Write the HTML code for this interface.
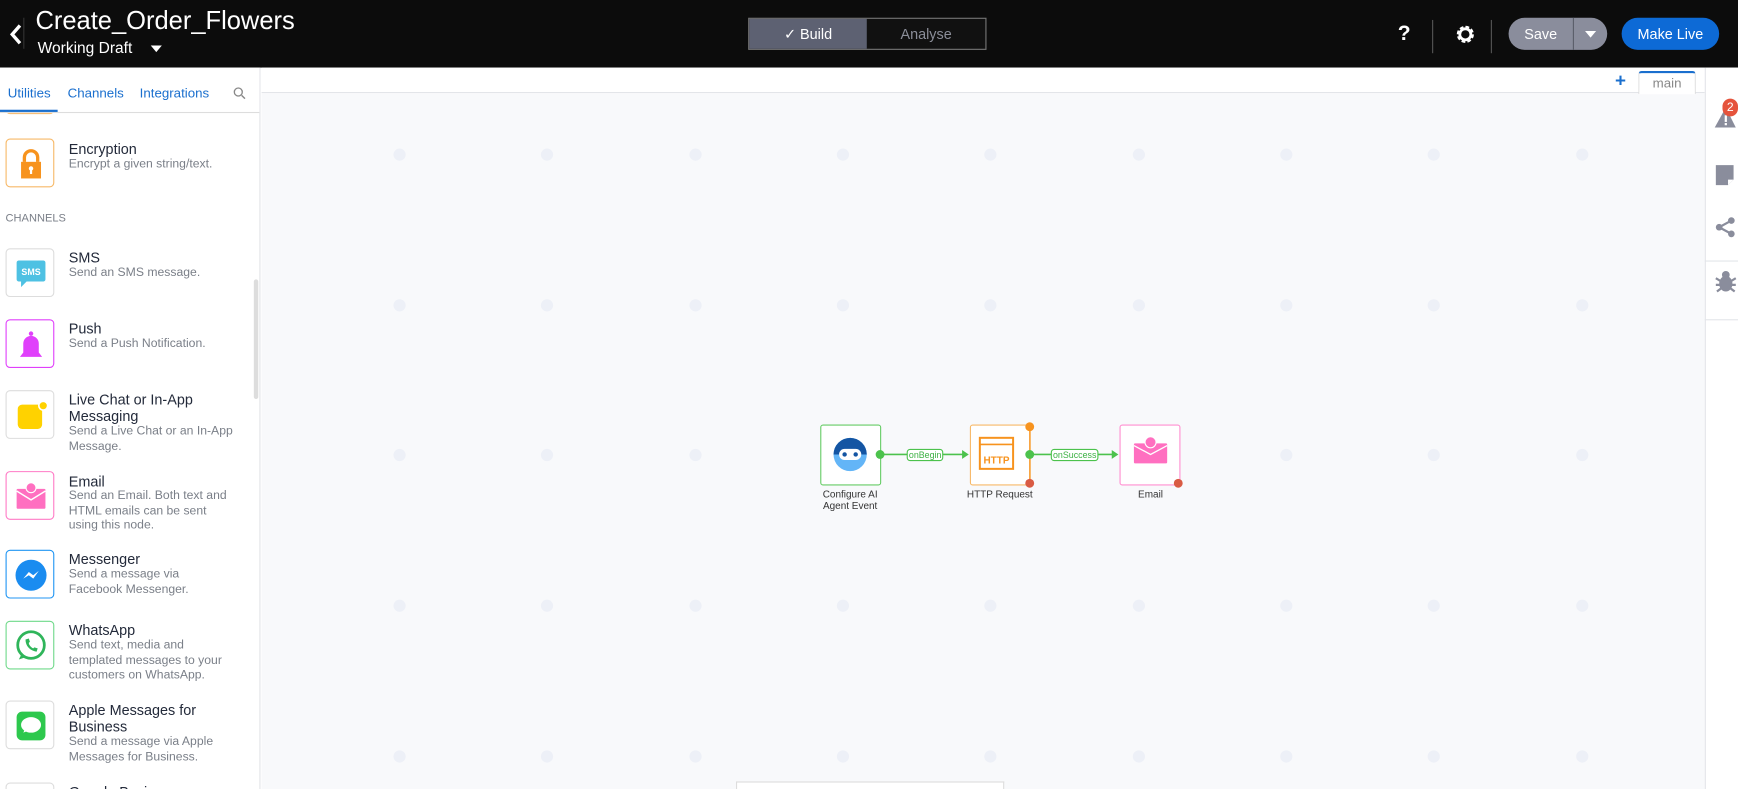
<!DOCTYPE html>
<html><head><meta charset="utf-8"><style>
*{box-sizing:border-box;margin:0;padding:0}
html,body{width:1738px;height:789px;overflow:hidden}
body{background:#fff;font-family:"Liberation Sans",Arial,sans-serif}
#w{width:1568px;height:712px;transform:scale(1.10842);transform-origin:0 0;position:relative;overflow:hidden}
.a{position:absolute}
.hdr{left:0;top:0;width:1568px;height:61px;background:#0c0c0c;color:#fff}
.side{left:0;top:61px;width:235px;height:651px;background:#fff;border-right:1px solid #e2e4e8;overflow:hidden}
.ib{position:absolute;left:5px;width:44px;height:44px;border:1px solid #ddd;border-radius:4px;background:#fff}
.t{position:absolute;left:62px;font-size:13px;color:#232a3a;line-height:15px}
.d{position:absolute;left:62px;font-size:11px;color:#7a7f88;line-height:13.5px;width:152px}
.dot{position:absolute;width:11px;height:11px;border-radius:50%;background:#edf0f7}
.nl{position:absolute;font-size:9px;color:#333;text-align:center;line-height:10px;width:80px}
.lbl{position:absolute;font-size:8px;color:#3cb043;border:1px solid #4cc24c;border-radius:3px;background:#fff;padding:0 1px;line-height:9px}
</style></head><body><div id="w">
<div class="a hdr">
 <svg class="a" style="left:8px;top:21px" width="12" height="20" viewBox="0 0 12 20"><path d="M10 2 L3 10 L10 18" stroke="#fff" stroke-width="3" fill="none"/></svg>
 <div class="a" style="left:21px;top:16px;width:1px;height:28px;background:#333"></div>
 <div class="a" style="left:32px;top:5px;font-size:23px">Create_Order_Flowers</div>
 <div class="a" style="left:34px;top:35px;font-size:14px">Working Draft</div>
 <div class="a" style="left:136px;top:41px;border-left:5px solid transparent;border-right:5px solid transparent;border-top:6px solid #fff"></div>
 <div class="a" style="left:675px;top:16px;width:215px;height:29px;border:1px solid #777;background:#111"></div>
 <div class="a" style="left:676px;top:17px;width:106px;height:27px;background:#5d6172;color:#fff;font-size:13px;text-align:center;line-height:27px">&#10003; Build</div>
 <div class="a" style="left:782px;top:17px;width:107px;height:27px;color:#8b8e99;font-size:13px;text-align:center;line-height:27px">Analyse</div>
 <div class="a" style="left:1261px;top:20px;font-size:19px;font-weight:bold">?</div>
 <div class="a" style="left:1292px;top:18px;width:1px;height:30px;background:#555"></div>
 <svg class="a" style="left:1312px;top:21px" width="20" height="20" viewBox="0 0 20 20"><circle cx="10" cy="10" r="6" fill="none" stroke="#fff" stroke-width="3.5" stroke-dasharray="3 1.7"/><circle cx="10" cy="10" r="5" fill="none" stroke="#fff" stroke-width="2.5"/></svg>
 <div class="a" style="left:1345px;top:18px;width:1px;height:30px;background:#555"></div>
 <div class="a" style="left:1361px;top:16px;width:89px;height:29px;border-radius:15px;background:#8a8d9c"></div>
 <div class="a" style="left:1361px;top:16px;width:58px;height:29px;color:#fff;font-size:13px;text-align:center;line-height:29px">Save</div>
 <div class="a" style="left:1419px;top:16px;width:1px;height:29px;background:#5a5d69"></div>
 <div class="a" style="left:1430px;top:28px;border-left:5px solid transparent;border-right:5px solid transparent;border-top:6px solid #fff"></div>
 <div class="a" style="left:1463px;top:16px;width:88px;height:29px;border-radius:15px;background:#0d6ad6;color:#fff;font-size:13px;text-align:center;line-height:29px">Make Live</div>
</div>
<div class="a side">
 <div class="ib" style="top:30px;height:12px;border-color:#f7b968"></div>
 <div class="a" style="left:0;top:0;width:235px;height:41px;background:#fff;border-bottom:1px solid #ddd"></div>
 <div class="a" style="left:7px;top:16px;font-size:12px;color:#1a6fce">Utilities</div>
 <div class="a" style="left:0;top:38px;width:52px;height:2px;background:#1a6fce"></div>
 <div class="a" style="left:61px;top:16px;font-size:12px;color:#1a6fce">Channels</div>
 <div class="a" style="left:126px;top:16px;font-size:12px;color:#1a6fce">Integrations</div>
 <svg class="a" style="left:210px;top:17px" width="12" height="12"><circle cx="5" cy="5" r="3.6" fill="none" stroke="#888" stroke-width="1.2"/><path d="M8 8l3 3" stroke="#888" stroke-width="1.3"/></svg>
 <div class="ib" style="top:64px;border-color:#f7b968"><svg width="44" height="44"><path d="M16 20v-4a6 6 0 0 1 12 0v4" stroke="#f7931e" stroke-width="3" fill="none"/><rect x="13" y="20" width="18" height="15" fill="#f7931e"/><circle cx="22" cy="26" r="2" fill="#fff"/><rect x="21" y="26" width="2" height="5" fill="#fff"/></svg></div>
 <div class="t" style="top:66px">Encryption</div><div class="d" style="top:81px;width:170px">Encrypt a given string/text.</div>
 <div class="a" style="left:5px;top:131px;font-size:10px;color:#7a7f88">CHANNELS</div>
 <div class="ib" style="top:163px"><svg width="44" height="44"><rect x="9" y="10" width="26" height="19" rx="2" fill="#4ec1e3"/><path d="M13 29v5l5-5z" fill="#4ec1e3"/><text x="22" y="23" font-size="8" fill="#fff" text-anchor="middle" font-family="Liberation Sans" font-weight="bold">SMS</text></svg></div>
 <div class="t" style="top:164px">SMS</div><div class="d" style="top:179px">Send an SMS message.</div>
 <div class="ib" style="top:227px;border-color:#e040fb"><svg width="44" height="44"><path d="M12 33h20l-3-4v-8a7 7 0 0 0-14 0v8z" fill="#e040fb"/><circle cx="22" cy="12" r="2" fill="#e040fb"/></svg></div>
 <div class="t" style="top:228px">Push</div><div class="d" style="top:243px">Send a Push Notification.</div>
 <div class="ib" style="top:291px"><svg width="44" height="44"><rect x="10" y="12" width="22" height="22" rx="4" fill="#ffd200"/><circle cx="33" cy="13" r="4" fill="#ffd200" stroke="#fff" stroke-width="1.5"/></svg></div>
 <div class="t" style="top:292px;width:160px">Live Chat or In-App Messaging</div><div class="d" style="top:322px">Send a Live Chat or an In-App Message.</div>
 <div class="ib" style="top:364px;border-color:#ff7bc6"><svg width="44" height="44"><rect x="9" y="15" width="26" height="18" rx="1" fill="#ff6fc0"/><path d="M9 17l13 8 13-8" stroke="#fff" stroke-width="1.3" fill="none"/><circle cx="22" cy="14" r="4.5" fill="#ff6fc0" stroke="#fff"/></svg></div>
 <div class="t" style="top:366px">Email</div><div class="d" style="top:380px">Send an Email. Both text and HTML emails can be sent using this node.</div>
 <div class="ib" style="top:435px;border-color:#2196f3"><svg width="44" height="44"><circle cx="22" cy="22" r="14" fill="#1a8cf0"/><path d="M15 25l5-6 4 3 5-4-5 7-4-3z" fill="#fff"/></svg></div>
 <div class="t" style="top:436px">Messenger</div><div class="d" style="top:451px;width:120px">Send a message via Facebook Messenger.</div>
 <div class="ib" style="top:499px;border-color:#6fd98a"><svg width="44" height="44"><circle cx="22" cy="21" r="12" fill="none" stroke="#2fb55a" stroke-width="2.5"/><path d="M11 34l3-6 3 4z" fill="#2fb55a"/><path d="M17 16c0 6 4 10 10 11l1-3-3-1-1 1c-2-1-4-3-4-5l1-1-1-3z" fill="#2fb55a"/></svg></div>
 <div class="t" style="top:500px">WhatsApp</div><div class="d" style="top:515px;width:140px">Send text, media and templated messages to your customers on WhatsApp.</div>
 <div class="ib" style="top:571px"><svg width="44" height="44"><rect x="9" y="9" width="26" height="26" rx="5" fill="#2dc84d"/><ellipse cx="22" cy="21" rx="9" ry="7" fill="#fff"/><path d="M15 28l2-4 3 2z" fill="#fff"/></svg></div>
 <div class="t" style="top:572px;width:160px">Apple Messages for Business</div><div class="d" style="top:602px">Send a message via Apple Messages for Business.</div>
 <div class="ib" style="top:645px"></div>
 <div class="t" style="top:646px">Google Business</div>
 <div class="a" style="left:229px;top:191px;width:4px;height:108px;border-radius:2px;background:#ddd"></div>
</div>
<div class="a" style="left:236px;top:108px;width:18px;height:25px;background:#fff;border:1px solid #eee;border-left:none"><div class="a" style="left:3px;top:7px;border-top:5px solid transparent;border-bottom:5px solid transparent;border-right:6px solid #1a6fce"></div></div>
<div class="a" style="left:236px;top:61px;width:1302px;height:23px;background:#fff;border-bottom:1px solid #e3e5e9"></div>
<div class="a" style="left:236px;top:84px;width:1302px;height:628px;background:#f8f9fb"></div>
<div class="a" style="left:1457px;top:65px;font-size:17px;font-weight:bold;color:#1a6fce;line-height:15px">+</div>
<div class="a" style="left:1478px;top:64px;width:52px;height:21px;background:#fff;border:1px solid #ddd;border-top:2px solid #1a6fce;border-bottom:none;border-radius:3px 3px 0 0;font-size:12px;color:#888;text-align:center;line-height:19px">main</div>
<div class="a" style="left:1538px;top:61px;width:30px;height:651px;background:#fff;border-left:1px solid #e3e5e9"></div>
<svg class="a" style="left:1546px;top:95px" width="22" height="22"><path d="M11 2 L20 20 H1z" fill="#8a8d9c"/><rect x="10" y="9" width="2" height="6" fill="#fff"/><rect x="10" y="16" width="2" height="2" fill="#fff"/></svg>
<div class="a" style="left:1554px;top:89px;width:14px;height:16px;border-radius:8px;background:#e5533c;color:#fff;font-size:11px;line-height:16px;text-align:center">2</div>
<svg class="a" style="left:1547px;top:148px" width="18" height="20"><path d="M1 1h16v13l-5 5H1z" fill="#8a8d9c"/><path d="M12 19v-5h5" fill="#fff"/></svg>
<svg class="a" style="left:1547px;top:195px" width="20" height="20"><circle cx="15" cy="4" r="3" fill="#8a8d9c"/><circle cx="4" cy="10" r="3" fill="#8a8d9c"/><circle cx="15" cy="16" r="3" fill="#8a8d9c"/><path d="M15 4L4 10l11 6" stroke="#8a8d9c" stroke-width="2" fill="none"/></svg>
<div class="a" style="left:1538px;top:235px;width:30px;height:1px;background:#e3e5e9"></div>
<svg class="a" style="left:1546px;top:243px" width="22" height="22"><ellipse cx="11" cy="13" rx="6" ry="7" fill="#8a8d9c"/><circle cx="11" cy="5" r="3.5" fill="#8a8d9c"/><path d="M2 8l5 3M2 14h5M3 20l4-3M20 8l-5 3M20 14h-5M19 20l-4-3" stroke="#8a8d9c" stroke-width="2"/></svg>
<div class="a" style="left:1538px;top:288px;width:30px;height:1px;background:#e3e5e9"></div>
<div class="dot" style="left:355px;top:134px"></div><div class="dot" style="left:488px;top:134px"></div><div class="dot" style="left:622px;top:134px"></div><div class="dot" style="left:755px;top:134px"></div><div class="dot" style="left:888px;top:134px"></div><div class="dot" style="left:1022px;top:134px"></div><div class="dot" style="left:1155px;top:134px"></div><div class="dot" style="left:1288px;top:134px"></div><div class="dot" style="left:1422px;top:134px"></div>
<div class="dot" style="left:355px;top:270px"></div><div class="dot" style="left:488px;top:270px"></div><div class="dot" style="left:622px;top:270px"></div><div class="dot" style="left:755px;top:270px"></div><div class="dot" style="left:888px;top:270px"></div><div class="dot" style="left:1022px;top:270px"></div><div class="dot" style="left:1155px;top:270px"></div><div class="dot" style="left:1288px;top:270px"></div><div class="dot" style="left:1422px;top:270px"></div>
<div class="dot" style="left:355px;top:405px"></div><div class="dot" style="left:488px;top:405px"></div><div class="dot" style="left:622px;top:405px"></div><div class="dot" style="left:1155px;top:405px"></div><div class="dot" style="left:1288px;top:405px"></div><div class="dot" style="left:1422px;top:405px"></div>
<div class="dot" style="left:355px;top:541px"></div><div class="dot" style="left:488px;top:541px"></div><div class="dot" style="left:622px;top:541px"></div><div class="dot" style="left:755px;top:541px"></div><div class="dot" style="left:888px;top:541px"></div><div class="dot" style="left:1022px;top:541px"></div><div class="dot" style="left:1155px;top:541px"></div><div class="dot" style="left:1288px;top:541px"></div><div class="dot" style="left:1422px;top:541px"></div>
<div class="dot" style="left:355px;top:677px"></div><div class="dot" style="left:488px;top:677px"></div><div class="dot" style="left:622px;top:677px"></div><div class="dot" style="left:755px;top:677px"></div><div class="dot" style="left:888px;top:677px"></div><div class="dot" style="left:1022px;top:677px"></div><div class="dot" style="left:1155px;top:677px"></div><div class="dot" style="left:1288px;top:677px"></div><div class="dot" style="left:1422px;top:677px"></div>
<svg class="a" style="left:730px;top:375px" width="350" height="75">
 <rect x="10.5" y="8.5" width="54" height="54" rx="2" fill="#fff" stroke="#66cc66"/>
 <circle cx="37" cy="35" r="15" fill="#63b5f7"/><path d="M22 35a15 15 0 0 1 30 0z" fill="#1455a3"/><rect x="27" y="30" width="20" height="10" rx="5" fill="#fff"/><circle cx="32" cy="35" r="2" fill="#1455a3"/><circle cx="42" cy="35" r="2" fill="#1455a3"/>
 <line x1="64" y1="35" x2="140" y2="35" stroke="#4cc24c" stroke-width="1.5"/><path d="M138 31l6 4-6 4z" fill="#4cc24c"/><circle cx="64" cy="35" r="4" fill="#4cc24c"/>
 <rect x="145.5" y="8.5" width="54" height="54" rx="2" fill="#fff" stroke="#f7b968"/>
 <rect x="154" y="20" width="30" height="28" fill="none" stroke="#f7931e" stroke-width="1.8"/><line x1="154" y1="26" x2="184" y2="26" stroke="#f7931e" stroke-width="1.5"/><text x="169" y="43" font-size="9" font-weight="bold" fill="#f7931e" text-anchor="middle" font-family="Liberation Sans">HTTP</text>
 <line x1="199" y1="8" x2="199" y2="62" stroke="#f7931e"/><circle cx="199" cy="10" r="4" fill="#f7931e"/><circle cx="199" cy="61" r="4" fill="#d95b43"/>
 <line x1="199" y1="35" x2="275" y2="35" stroke="#4cc24c" stroke-width="1.5"/><path d="M273 31l6 4-6 4z" fill="#4cc24c"/><circle cx="199" cy="35" r="4" fill="#4cc24c"/>
 <rect x="280.5" y="8.5" width="54" height="54" rx="2" fill="#fff" stroke="#ff8fd0"/>
 <rect x="293" y="25" width="30" height="18" rx="1" fill="#ff6fc0"/><path d="M293 27l15 8 15-8" stroke="#fff" stroke-width="1.2" fill="none"/><circle cx="308" cy="24" r="5" fill="#ff6fc0" stroke="#fff"/>
 <circle cx="333" cy="61" r="4" fill="#d95b43"/>
</svg>
<div class="lbl" style="left:818px;top:405px">onBegin</div>
<div class="lbl" style="left:948px;top:405px">onSuccess</div>
<div class="nl" style="left:737px;top:441px;width:60px">Configure AI Agent Event</div>
<div class="nl" style="left:862px;top:441px">HTTP Request</div>
<div class="nl" style="left:998px;top:441px">Email</div>
<div class="a" style="left:664px;top:705px;width:242px;height:7px;background:#fff;border:1px solid #ddd;border-bottom:none"></div>
</div></body></html>
